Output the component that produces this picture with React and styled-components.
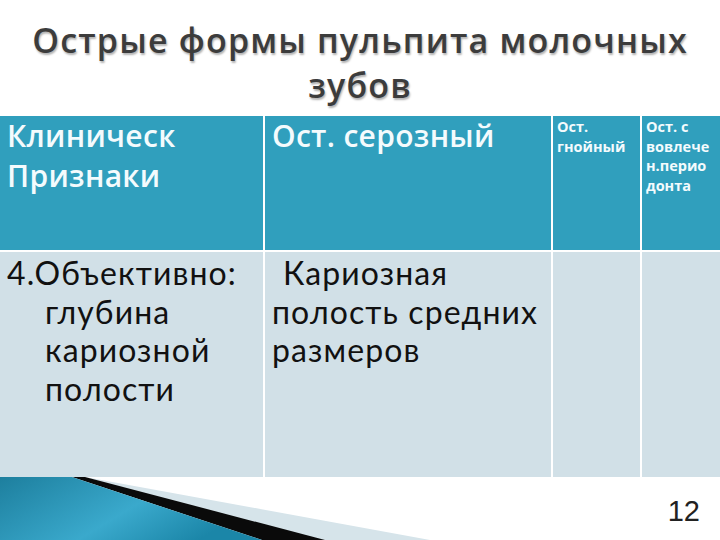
import styled, { createGlobalStyle } from "styled-components";

const GlobalStyle = createGlobalStyle`
  html, body {
    margin: 0;
    padding: 0;
    background: #ffffff;
  }
`;

const Slide = styled.div`
  width: 720px;
  height: 540px;
  overflow: hidden;
  display: flex;
  flex-direction: column;
  background: #ffffff;
`;

const Title = styled.h1`
  margin: 0;
  height: 116px;
  box-sizing: border-box;
  padding-top: 18px;
  text-align: center;
  font-family: "Open Sans", "DejaVu Sans", sans-serif;
  font-weight: 600;
  font-size: 34px;
  letter-spacing: 1.2px;
  line-height: 45px;
  color: #3c3c3c;
  text-shadow: 1px 2px 2px rgba(0, 0, 0, 0.3);
`;

const Table = styled.div`
  display: grid;
  grid-template-columns: 263px 286px 87px 1fr;
  grid-template-rows: 134px 225px;
  gap: 2px;
  background: #ffffff;
`;

const HeadCell = styled.div`
  background: #309fbd;
  color: #f4fbfd;
  font-family: "Open Sans", "DejaVu Sans", sans-serif;
  font-weight: ${({ small }) => (small ? 700 : 600)};
  font-size: ${({ small }) => (small ? "14.5px" : "30px")};
  letter-spacing: ${({ small }) => (small ? "0" : "0.3px")};
  line-height: ${({ small }) => (small ? "19.5px" : "40px")};
  padding: ${({ small }) => (small ? "1px 4px" : "0 7px")};
`;

const BodyCell = styled.div`
  background: #d1e0e7;
  color: #111111;
  font-family: "Lato", "DejaVu Sans", sans-serif;
  font-size: 32px;
  letter-spacing: 1.1px;
  line-height: 38.5px;
  padding: 2px 7px 2px ${({ hang }) => 7 + (hang || 0)}px;
  text-indent: ${({ hang, first }) => (hang ? -hang : first || 0)}px;
`;

const Footer = styled.div`
  flex: 1;
  display: flex;
  align-items: flex-start;
  justify-content: space-between;
`;

const Page = styled.span`
  font-family: "Liberation Sans Narrow", "Liberation Sans", sans-serif;
  font-size: 29px;
  color: #222222;
  padding: 18px 20px 0 0;
`;

function Decoration() {
  return (
    <svg width="430" height="63" viewBox="0 0 430 63">
      <defs>
        <linearGradient id="teal" x1="0" y1="0" x2="1" y2="0.4">
          <stop offset="0" stopColor="#1d7f9e" />
          <stop offset="0.6" stopColor="#3aa9cc" />
          <stop offset="1" stopColor="#1b86a8" />
        </linearGradient>
      </defs>
      <polygon points="85,0 430,63 300,63" fill="#d6e4ea" />
      <polygon points="72,0 85,0 325,63 262,63" fill="#0a0a0a" />
      <polygon points="0,0 72,0 262,63 0,63" fill="url(#teal)" />
    </svg>
  );
}

export default function App() {
  return (
    <Slide>
      <GlobalStyle />
      <Title>
        Острые формы пульпита молочных
        <br />
        зубов
      </Title>
      <Table>
        <HeadCell>
          Клиническ
          <br />
          Признаки
        </HeadCell>
        <HeadCell>Ост. серозный</HeadCell>
        <HeadCell small>
          Ост.
          <br />
          гнойный
        </HeadCell>
        <HeadCell small>
          Ост. с
          <br />
          вовлече
          <br />
          н.перио
          <br />
          донта
        </HeadCell>
        <BodyCell hang={38}>
          4.Объективно:
          <br />
          глубина
          <br />
          кариозной
          <br />
          полости
        </BodyCell>
        <BodyCell first={11}>
          Кариозная
          <br />
          полость средних
          <br />
          размеров
        </BodyCell>
        <BodyCell />
        <BodyCell />
      </Table>
      <Footer>
        <Decoration />
        <Page>12</Page>
      </Footer>
    </Slide>
  );
}
